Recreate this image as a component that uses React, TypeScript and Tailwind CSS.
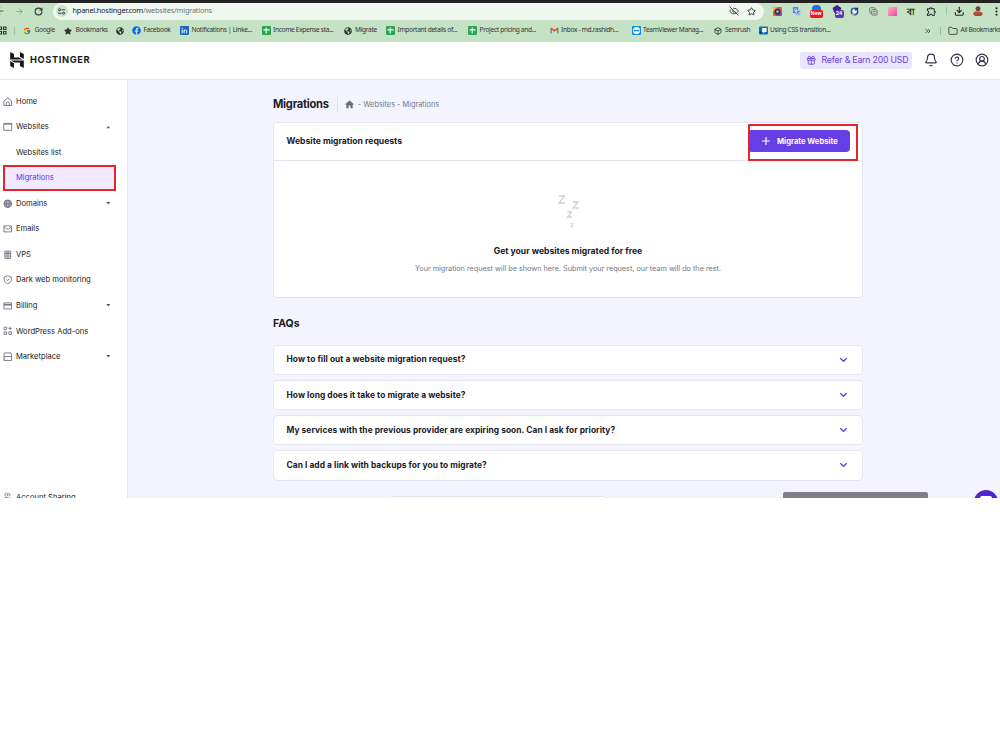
import type { ReactNode } from 'react';
import {
    ArrowLeft, ArrowRight, RotateCw, EyeOff, Star, Download, MoreVertical,
    Folder, Plus, Gift, Bell, HelpCircle, CircleUserRound, Users, Box, ChevronsRight,
} from 'lucide-react';
import { FcGoogle } from 'react-icons/fc';
import { FaFacebook, FaGlobeAmericas, FaStar } from 'react-icons/fa';
import { MdHome, MdOutlineExtension } from 'react-icons/md';

const SheetIcon = () => (
    <svg viewBox="0 0 9 9" className="size-[9px]">
        <rect width="9" height="9" rx="1" fill="#2aa653" />
        <path d="M4.2 1.5v6M1.5 3.9h6" stroke="#fff" strokeWidth="1.1" />
    </svg>
);

const LinkedinIcon = () => (
    <svg viewBox="0 0 9 9" className="size-[9px]">
        <rect width="9" height="9" rx="1" fill="#1567c4" />
        <path d="M2.2 3.7v3.6M4.1 7.3V3.7M4.1 5.1c.2-1.5 2.6-1.6 2.6.1v2.1" stroke="#fff" strokeWidth="1" fill="none" />
        <circle cx="2.2" cy="2.2" r=".6" fill="#fff" />
    </svg>
);

const GmailIcon = () => (
    <svg viewBox="0 0 9 9" className="size-[9px]">
        <path d="M1.2 7.5V2.4" stroke="#4285f4" strokeWidth="1.4" />
        <path d="M7.8 7.5V2.4" stroke="#34a853" strokeWidth="1.4" />
        <path d="M.9 2.1l3.6 2.8 3.6-2.8" stroke="#ea4335" strokeWidth="1.5" fill="none" />
    </svg>
);

const TeamViewerIcon = () => (
    <svg viewBox="0 0 9 9" className="size-[9px]">
        <rect width="9" height="9" rx="1" fill="#0e8ee9" />
        <circle cx="4.5" cy="4.5" r="3.5" fill="#fff" />
        <path d="M1.3 4.5l2-1.4v.9h2.4v-.9l2 1.4-2 1.4V5H3.3v.9z" fill="#0e8ee9" />
    </svg>
);

const DocsIcon = () => (
    <svg viewBox="0 0 9 9" className="size-[9px]">
        <rect width="9" height="8" y=".5" rx="1" fill="#0b6fb8" />
        <path d="M3.2 2h4.4v4H5.8L4.3 7.4V6H3.2z" fill="#fff" />
        <path d="M1 5.5h1.3v2H1z" fill="#063f70" />
    </svg>
);

const BOOKMARKS: { label: string; icon: ReactNode; box: string }[] = [
    { label: 'Google', icon: <FcGoogle className="size-[8px]" />, box: 'w-[41px]' },
    { label: 'Bookmarks', icon: <FaStar className="size-[8px]" />, box: 'w-[51.5px]' },
    { label: '', icon: <FaGlobeAmericas className="size-[8px]" />, box: 'w-[16.5px]' },
    { label: 'Facebook', icon: <FaFacebook className="size-[9px] text-[#0866ff]" />, box: 'w-[48px]' },
    { label: 'Notifications | Linke...', icon: <LinkedinIcon />, box: 'w-[81.5px]' },
    { label: 'Income Expense sta...', icon: <SheetIcon />, box: 'w-[82px]' },
    { label: 'Migrate', icon: <FaGlobeAmericas className="size-[8px]" />, box: 'w-[42.5px]' },
    { label: 'Important details of...', icon: <SheetIcon />, box: 'w-[82px]' },
    { label: 'Project pricing and...', icon: <SheetIcon />, box: 'w-[81.5px]' },
    { label: 'Inbox - md.rashidh...', icon: <GmailIcon />, box: 'w-[82px]' },
    { label: 'TeamViewer Manag...', icon: <TeamViewerIcon />, box: 'w-[82px]' },
    { label: 'Semrush', icon: <Box className="size-[8px]" strokeWidth={2.5} />, box: 'w-[45px]' },
    { label: 'Using CSS transition...', icon: <DocsIcon />, box: 'w-[80px]' },
];

const NAV: { label: string; icon?: ReactNode; arrow?: string; active?: boolean }[] = [
    { label: 'Home', icon: <path d="M1 4.2L5 1l4 3.2V9H1zM3.5 9V6.5a1.5 1.5 0 0 1 3 0V9" /> },
    { label: 'Websites', icon: <path d="M.8 1.5h8.4v7.2H.8zM.8 2.3h8.4" />, arrow: 'up' },
    { label: 'Websites list' },
    { label: 'Migrations', active: true },
    { label: 'Domains', icon: <><circle cx="5" cy="5" r="4" fill="#b3b2c0" /><path d="M1 5h8M5 1c-2.5 2.5-2.5 5.5 0 8 2.5-2.5 2.5-5.500 0-8z" /></>, arrow: 'down' },
    { label: 'Emails', icon: <path d="M1 2h8v6.3H1zM1 2.8l2.8 2.4h2.4L9 2.8" /> },
    { label: 'VPS', icon: <path d="M2 1.2h6v7.6H2zM2 3.7h6M2 6.3h6M3.5 2.5h3M3.5 5h3M3.5 7.5h3" /> },
    { label: 'Dark web monitoring', icon: <path d="M5 .8l3.8 1.3v3C8.8 7 7 8.500 5 9.300 3 8.500 1.200 7 1.200 5.100v-3zM3.300 4.800L4.600 6l2.300-2.300" /> },
    { label: 'Billing', icon: <path d="M1 2h8v6.3H1zM1 4.3h8M1 3.7h8" />, arrow: 'down' },
    { label: 'WordPress Add-ons', icon: <path d="M1.2 1.2h2.6v2.6H1.2zM1.2 6.2h2.6v2.6H1.2zM6.2 6.2h2.6v2.6H6.2zM7.5.8v3.4M5.8 2.5h3.4" /> },
    { label: 'Marketplace', icon: <path d="M1.5 1h7l.5 3v5H1V4zM1 4.8h8M1 7h1" />, arrow: 'down' },
];

const FAQS = [
    'How to fill out a website migration request?',
    'How long does it take to migrate a website?',
    'My services with the previous provider are expiring soon. Can I ask for priority?',
    'Can I add a link with backups for you to migrate?',
];

function Extensions() {
    return (
        <div className="flex shrink-0 items-center text-[#222]">
            <div className="w-[18.5px]">
                <svg viewBox="0 0 10 10" className="size-[9px]">
                    <rect width="10" height="10" rx="1.5" fill="#e9573f" />
                    <path d="M0 5V1.5A1.5 1.5 0 0 1 1.5 0H5z" fill="#f5b63f" />
                    <path d="M10 5v3.5a1.5 1.5 0 0 1-1.5 1.5H3z" fill="#7a4ad0" />
                    <circle cx="5" cy="5.2" r="3.3" fill="#22324a" />
                    <circle cx="5" cy="5.2" r="1.5" fill="#69c9dd" />
                </svg>
            </div>
            <div className="w-[18px]">
                <svg viewBox="0 0 10 10" className="size-[9px]">
                    <rect x="1" y="0" width="6" height="7" rx="1" fill="#4388f0" />
                    <rect x="4" y="3" width="5.5" height="6.5" rx="1" fill="#a9c1e6" />
                    <path d="M5 5h3.5M6.8 4.2v1L5.3 8M6 6l2 2" stroke="#4772b8" strokeWidth=".7" fill="none" />
                    <path d="M5.4 2.5a1.5 1.5 0 1 0 .1 1.5H4.2" stroke="#fff" strokeWidth=".7" fill="none" />
                </svg>
            </div>
            <div className="relative h-[12px] w-[23px]">
                <div className="ml-[2px] h-[8px] w-[9px] rounded-t-[4px] bg-[#1a73e8]" />
                <span className="absolute top-[5px] left-0 h-[7.5px] w-[13px] rounded-[2px] bg-[#f0151f] text-center text-[5px] leading-[7.5px] font-bold text-white">New</span>
            </div>
            <div className="relative -ml-[1px] h-[12px] w-[18px]">
                <svg viewBox="0 0 10 9" className="h-[8px] w-[10px]">
                    <path d="M5 0l5 3.5L8 9H2L0 3.5z" fill="#40208c" />
                </svg>
                <span className="absolute top-[5px] left-[3px] h-[7.5px] w-[9px] rounded-[2px] bg-[#5c35b8] text-center text-[5.5px] leading-[7.5px] font-bold text-white">24</span>
            </div>
            <div className="w-[19px]">
                <svg viewBox="0 0 10 10" className="size-[9px]">
                    <circle cx="5" cy="5" r="3.5" fill="#e8f0fa" stroke="#2657b5" strokeWidth="1.7" />
                    <path d="M5.5 3.5L9 1" stroke="#26355a" strokeWidth="1.5" />
                    <path d="M2 7.5A3.5 3.5 0 0 0 5 8.5" stroke="#e9b62f" strokeWidth="1.4" fill="none" />
                </svg>
            </div>
            <div className="w-[19px]">
                <svg viewBox="0 0 10 10" className="size-[9px]" fill="none" stroke="#777" strokeWidth="1.1">
                    <rect x=".8" y=".8" width="6" height="6" rx="1" />
                    <rect x="3" y="3" width="6" height="6" rx="1" fill="#c5d4c5" />
                    <path d="M4.5 5h3M4.5 7h3" strokeWidth=".8" />
                </svg>
            </div>
            <div className="w-[19px]"><div className="size-[9px] rounded-[1px] bg-linear-to-br from-[#fbb1c0] to-[#ee3f9b]" /></div>
            <div className="w-[19px] text-[9px] leading-[11px] font-bold">বা</div>
            <div className="w-[20px]"><MdOutlineExtension className="size-[11px]" /></div>
            <div className="h-[8px] w-[8.5px] border-l border-[#98c39b]" />
            <div className="w-[19px]"><Download className="size-[10.5px]" strokeWidth={2.5} /></div>
            <div className="w-[18px]">
                <svg viewBox="0 0 10 10" className="size-[10px]">
                    <circle cx="5" cy="2.7" r="2.5" fill="#70483b" />
                    <path d="M0 8c1-3 2.5-2.5 5-2.5S9 6 10 8l-2 2H2z" fill="#b44939" />
                </svg>
            </div>
            <MoreVertical className="size-[11px] shrink-0" strokeWidth={2.5} />
        </div>
    );
}

function BrowserChrome() {
    return (
        <div className="flex h-[42px] shrink-0 flex-col bg-[#c5e2c5] font-['Noto_Sans',sans-serif] text-[#333]">
            <div className="h-[2.5px] shrink-0 bg-[#222]" />
            <div className="flex h-[17px] shrink-0 items-center">
                <ArrowLeft className="-ml-[5px] size-[10px] shrink-0" />
                <ArrowRight className="ml-[10px] size-[9px] shrink-0 text-[#78947a]" />
                <RotateCw className="ml-[10px] size-[9px] shrink-0" strokeWidth={3} />
                <div className="ml-[9.5px] flex h-[17px] w-[711px] shrink-0 items-center rounded-full bg-[#eff7ee] pr-[8px] pl-[3px]">
                    <div className="flex size-[12px] items-center justify-center rounded-full bg-[#cbe3ca]">
                        <svg viewBox="0 0 8 8" className="size-[7px]" fill="none" stroke="#333" strokeWidth="1">
                            <path d="M4 2h4M0 6h4" />
                            <circle cx="1.7" cy="2" r="1.2" />
                            <circle cx="6.3" cy="6" r="1.2" />
                        </svg>
                    </div>
                    <p className="ml-[5px] text-[7.4px] tracking-[-0.23px] whitespace-nowrap text-[#222]">hpanel.hostinger.com<span className="text-[#707870]">/websites/migrations</span></p>
                    <EyeOff className="ml-auto size-[10px]" />
                    <Star className="ml-[8px] size-[9px]" strokeWidth={2.5} />
                </div>
                <div className="ml-[9.5px] shrink-0"><Extensions /></div>
            </div>
            <div className="flex h-[22px] items-center text-[6.6px] leading-none tracking-[-0.32px] whitespace-nowrap">
                <svg viewBox="0 0 9 9" className="-ml-[2px] size-[9px] shrink-0" fill="none" stroke="#333" strokeWidth="1.1">
                    <path d="M1 1h2.5v2.5H1zM5.5 1H8v2.5H5.5zM1 5.5h2.5V8H1zM5.5 5.5H8V8H5.5z" />
                </svg>
                <div className="ml-[7px] h-[8px] w-[9px] shrink-0 border-l border-[#98c39b]" />
                {BOOKMARKS.map((b, i) => (
                    <div key={i} className={`flex shrink-0 items-center ${b.box}`}>
                        <div className="w-[11.5px] shrink-0">{b.icon}</div>
                        <span>{b.label}</span>
                    </div>
                ))}
                <ChevronsRight className="ml-[85px] size-[8px] shrink-0" strokeWidth={2.5} />
                <div className="ml-[8px] h-[8px] w-[8px] shrink-0 border-l border-[#98c39b]" />
                <Folder className="size-[10px] shrink-0" />
                <span className="ml-[3px]">All Bookmarks</span>
            </div>
        </div>
    );
}

function Header() {
    return (
        <header className="flex h-[38px] shrink-0 items-center border-b border-[#e6e6ee] bg-white pr-[11px] pb-px pl-[9px]">
            <svg viewBox="1 0 22 24" className="h-[16px] w-[16px]" fill="#151515">
                <path d="M16.415 0v7.160l5.785 3.384V2.949L16.415 0ZM1.800 0v11.237h18.815L14.890 8.090l-7.457-.003V3.024L1.800 0Zm14.615 20.894v-5.019l-7.514-.005c.007.033-5.820-3.197-5.820-3.197l19.119.091V24l-5.785-3.106ZM1.800 13.551v7.343l5.633 2.949v-6.988L1.800 13.551Z" />
            </svg>
            <span className="ml-[5px] text-[9.3px] font-bold tracking-[0.6px] text-[#1b1b1f]">HOSTINGER</span>
            <div className="ml-auto flex h-[17px] w-[112px] items-center rounded-[3px] bg-[#ebe4ff] pl-[6px] text-[#6a42dd]">
                <Gift className="size-[10.5px] shrink-0" />
                <span className="ml-[5px] pt-px text-[8.7px] tracking-[-0.18px] whitespace-nowrap">Refer &amp; Earn 200 USD</span>
            </div>
            <Bell className="ml-[12px] size-[14px] text-[#36344d]" strokeWidth={2} />
            <HelpCircle className="ml-[11.5px] size-[14px] text-[#36344d]" strokeWidth={2} />
            <CircleUserRound className="ml-[11.5px] size-[14px] text-[#36344d]" strokeWidth={2} />
        </header>
    );
}

function Sidebar() {
    return (
        <aside className="flex w-[127.5px] shrink-0 flex-col border-r border-[#e6e6f0] bg-white pt-[8.5px] text-[7.6px] text-[#222]">
            {NAV.map(item => (
                <div key={item.label} className={`flex h-[25.55px] shrink-0 items-center ${item.active ? 'mr-[11px] ml-[3px] border-2 border-[#e3262d] bg-[#f0e9ff] text-[#6a34d8]' : 'mx-[3px]'}`}>
                    <div className={item.active ? 'w-[11px]' : 'w-[13px]'}>
                        {item.icon && (
                            <svg viewBox="0 0 10 10" className="size-[9.5px]" fill="none" stroke="#6d6c80" strokeWidth="0.9">{item.icon}</svg>
                        )}
                    </div>
                    <span>{item.label}</span>
                    {item.arrow && (
                        <svg viewBox="0 0 5 3" className={`mr-[13.5px] ml-auto h-[2.5px] w-[4.5px] ${item.arrow === 'up' ? 'rotate-180' : ''}`}>
                            <path d="M0 0h5L2.5 3z" fill="#5b5b6c" />
                        </svg>
                    )}
                </div>
            ))}
            <div className="mx-[3px] mt-auto flex h-[6px] shrink-0 items-start overflow-hidden">
                <div className="w-[13px]"><Users className="size-[9px] text-[#6d6c80]" /></div>
                <span className="leading-[12px]">Account Sharing</span>
            </div>
        </aside>
    );
}

function Content() {
    return (
        <main className="relative flex-1 overflow-hidden bg-[#f4f4ff] pl-[145.5px] text-[#202025]">
            <div className="w-[590px]">
                <div className="flex h-[41.5px] items-center pt-[7px]">
                    <h1 className="text-[11.1px] font-bold tracking-[-0.24px]">Migrations</h1>
                    <div className="ml-[8px] h-[15px] w-[7px] border-l border-[#e2e2ee]" />
                    <MdHome className="size-[11px] text-[#6d6c80]" />
                    <span className="ml-[3px] text-[7.4px] tracking-[-0.02px] text-[#777688]">- Websites - Migrations</span>
                </div>

                <section className="h-[176px] rounded-[4px] border border-[#e4e4ee] bg-white">
                    <div className="relative flex h-[38.5px] items-center justify-between border-b border-[#e4e4ee] pr-[12px] pl-[12.5px]">
                        <h2 className="text-[8.6px] font-bold">Website migration requests</h2>
                        <button className="flex h-[22px] w-[102px] items-center rounded-[4px] bg-[#673de6] pl-[12px] text-[7.6px] font-bold text-white">
                            <Plus className="mr-[5px] size-[12px] shrink-0" strokeWidth={2.3} />
                            <span className="whitespace-nowrap">Migrate Website</span>
                        </button>
                        <div className="absolute top-[1.5px] right-[4.5px] h-[37px] w-[110px] border-2 border-[#e3262d]" />
                    </div>
                    <div className="flex flex-col items-center pt-[33px]">
                        <svg viewBox="0 0 24 36" className="h-[36px] w-[24px]" fill="none" stroke="#d0d0d8" strokeWidth="1.3">
                            <path d="M3 2h5.5L3 9h6M17 8h5l-5 6h5.5M11.5 18h4l-4 5h4.5" />
                            <path d="M14.5 29.5l3 .5-3 2.5 3 .5" strokeWidth="1" />
                        </svg>
                        <h3 className="mt-[15px] text-[8.6px] leading-[12px] font-bold">Get your websites migrated for free</h3>
                        <p className="mt-[5.5px] text-[7.3px] leading-[12px] tracking-[-0.02px] text-[#777688]">Your migration request will be shown here. Submit your request, our team will do the rest.</p>
                    </div>
                </section>

                <h2 className="mt-[18px] text-[10.5px] leading-[16px] font-bold">FAQs</h2>
                <div className="mt-[13px] flex flex-col gap-[4.6px]">
                    {FAQS.map(q => (
                        <div key={q} className="flex h-[30.6px] items-center justify-between rounded-[4px] border border-[#e6e6f1] bg-white pr-[14px] pl-[12.5px]">
                            <span className="text-[8.4px] font-bold tracking-[0.06px]">{q}</span>
                            <svg viewBox="0 0 9 6" className="h-[6px] w-[9px]" fill="none" stroke="#673de6" strokeWidth="1.4">
                                <path d="M1.3 1.3l3.2 2.9 3.2-2.9" />
                            </svg>
                        </div>
                    ))}
                </div>
                <div className="mt-[15px] ml-[118px] h-[10px] w-[216px] rounded-t-[3px] border border-[#e4e4f0] bg-white" />
            </div>
            <div className="absolute bottom-0 left-[655.5px] h-[6px] w-[144.5px] rounded-t-[2px] bg-[#818087]" />
            <div className="absolute top-[410px] left-[846.5px] flex size-[24px] justify-center rounded-full bg-[#5025d1] pt-[6px]">
                <div className="h-[9px] w-[12px] rounded-[2px] bg-white" />
            </div>
        </main>
    );
}

function App() {
    return (
        <div className="h-[750px] w-[1000px] overflow-hidden bg-white font-['Inter',sans-serif]">
            <div className="flex h-[498px] flex-col overflow-hidden">
                <BrowserChrome />
                <Header />
                <div className="flex min-h-0 flex-1">
                    <Sidebar />
                    <Content />
                </div>
            </div>
        </div>
    );
}

export default App;
